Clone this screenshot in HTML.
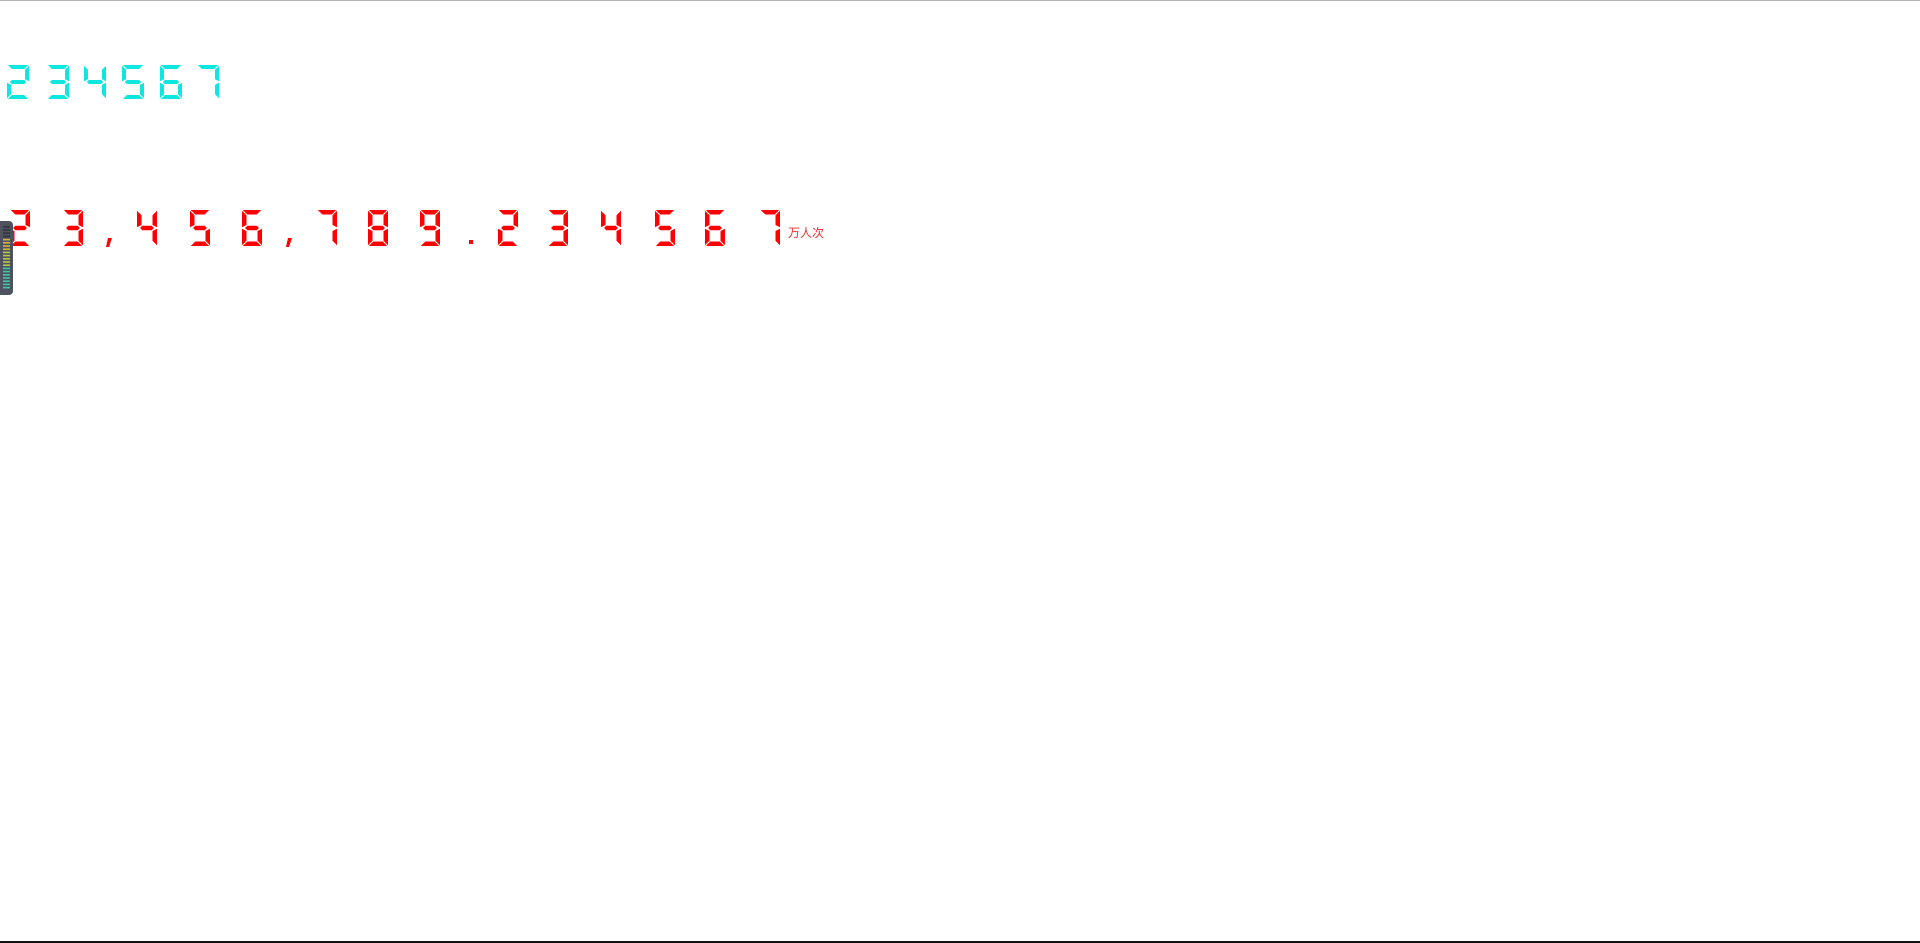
<!DOCTYPE html>
<html><head><meta charset="utf-8"><style>
html,body{margin:0;padding:0;background:#fff;width:1920px;height:943px;overflow:hidden;position:relative}
#top{position:absolute;left:0;top:0;width:1920px;height:1px;background:#b4b4b4}
#bot{position:absolute;left:0;top:941px;width:1920px;height:2px;background:#111}
svg{position:absolute;left:0;top:0}
#unit{position:absolute;left:788px;top:224px;font:12px "Liberation Sans","Noto Sans CJK SC",sans-serif;color:#f03030}
#w{position:absolute;left:0;top:221px;width:13px;height:74px;background:#4d525e;border-radius:0 4px 4px 0}
</style></head><body>
<div id="top"></div><div id="bot"></div>
<svg id="s" width="1920" height="943"></svg>
<div id="unit">万人次</div>
<div id="w"></div>
<script>
var S={0:'abcdef',1:'bc',2:'abged',3:'abgcd',4:'fgbc',5:'afgcd',6:'afgedc',7:'abc',8:'abcdefg',9:'abcfgd'};
function seg(x,y,w,h,t){var m=y+h/2,g=0.8;return{
a:[[x+g,y],[x+w-g,y],[x+w-t-g,y+t],[x+t+g,y+t]],
d:[[x+g,y+h],[x+w-g,y+h],[x+w-t-g,y+h-t],[x+t+g,y+h-t]],
g:[[x+t/2+g,m],[x+t+g,m-t/2],[x+w-t-g,m-t/2],[x+w-t/2-g,m],[x+w-t-g,m+t/2],[x+t+g,m+t/2]],
f:[[x,y+g],[x+t,y+t+g],[x+t,m-t/2-g],[x,m-g]],
e:[[x,m+g],[x+t,m+t/2+g],[x+t,y+h-t-g],[x,y+h-g]],
b:[[x+w,y+g],[x+w-t,y+t+g],[x+w-t,m-t/2-g],[x+w,m-g]],
c:[[x+w,m+g],[x+w-t,m+t/2+g],[x+w-t,y+h-t-g],[x+w,y+h-g]]};}
var out='';
function digit(d,x,y,w,h,t,col){var P=seg(x,y,w,h,t);S[d].split('').forEach(function(k){out+='<polygon fill="'+col+'" points="'+P[k].map(function(p){return p.join(',')}).join(' ')+'"/>';});}
[2,3,4,5,6,7].forEach(function(d,i){digit(d,[7,47,84,122,160,197][i],65,22,34,4,'#0ee6e0');});
var R=[[2,10],[3,63],[',',105],[4,137],[5,190],[6,242],[',',285],[7,317],[8,368],[9,420],['.',468],[2,498],[3,548],[4,601],[5,655],[6,705],[7,760]];
R.forEach(function(r){var c='#ff0000';
 if(r[0]===',')out+='<polygon fill="'+c+'" points="'+(r[1]+3)+',238 '+(r[1]+7)+',238 '+(r[1]+4)+',247 '+(r[1]+1)+',247"/>';
 else if(r[0]==='.')out+='<rect fill="'+c+'" x="'+(r[1]+1)+'" y="240" width="4" height="4"/>';
 else digit(r[0],r[1],210,20,36,4.5,c);});
// widget bars
var bars='';for(var i=0;i<20;i++){var y=226+i*3.2;var col=i<4?'#333640':(i<8?'#d8b23a':(i<13?'#b7c84a':'#3fc6a8'));bars+='<rect x="3" y="'+y+'" width="7" height="1.6" fill="'+col+'"/>';}
document.getElementById('s').innerHTML=out;
document.getElementById('w').outerHTML+='<svg width="20" height="300" style="left:0;top:0">'+bars+'</svg>';
</script>
</body></html>
